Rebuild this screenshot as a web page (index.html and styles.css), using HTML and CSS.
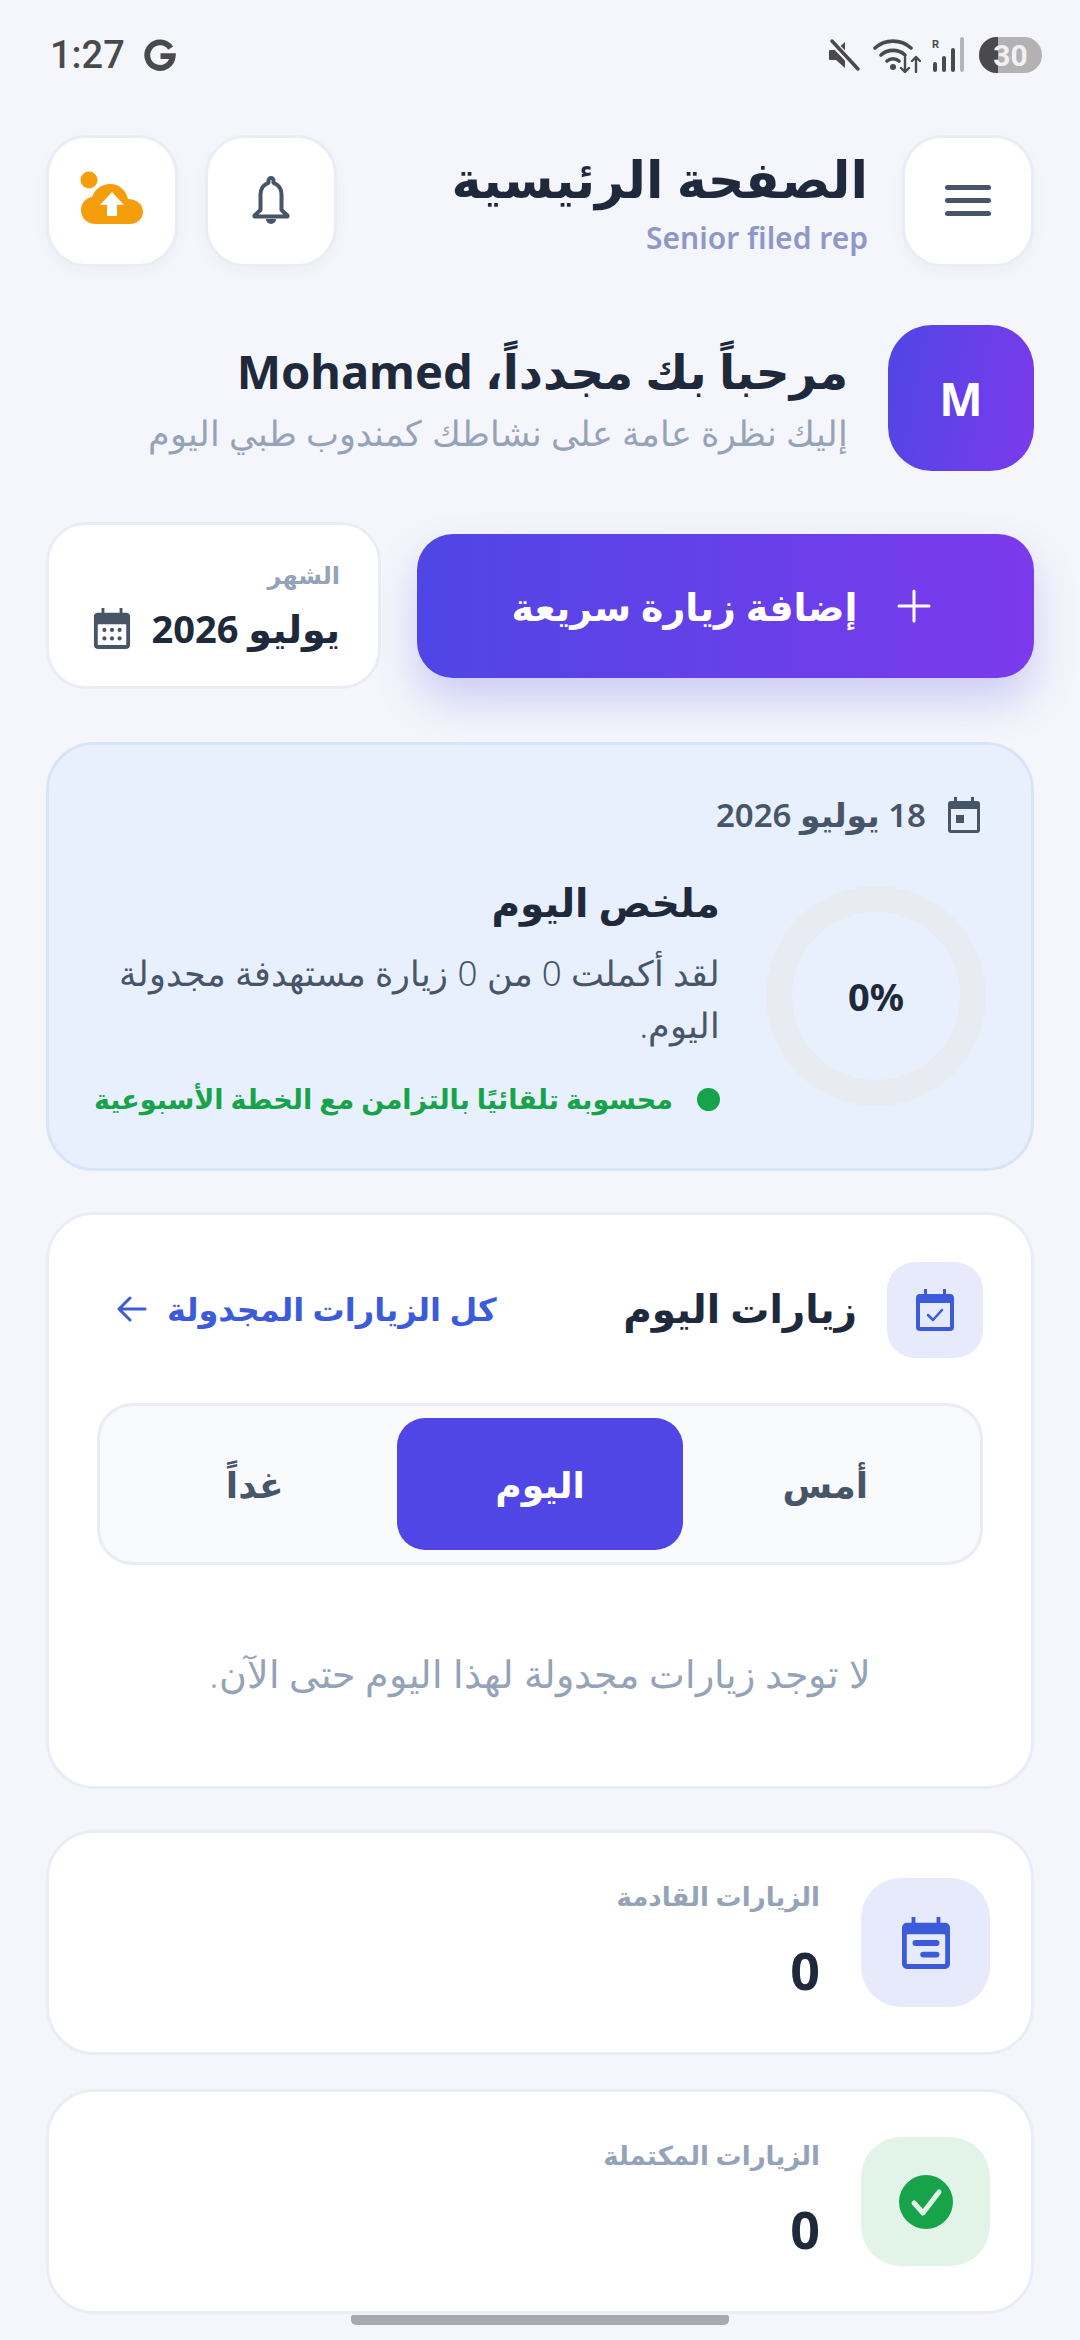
FILE: index.html
```html
<!DOCTYPE html>
<html lang="ar" dir="rtl">

<head>
    <meta charset="UTF-8" />
    <meta name="viewport" content="width=1080, height=2340" />
    <title>الصفحة الرئيسية</title>
    <link rel="stylesheet" href="styles.css">
</head>

<body>

    <!-- status bar -->
    <div class="status-bar" dir="ltr">
        <div class="status-left">
            <span class="clock">1:27</span>
            <svg class="g-icon" viewBox="0 0 32 32"><path d="M26 9.5A12 12 0 1 0 28 17H16.5" fill="none" stroke="#4a4a4c" stroke-width="5.5" /></svg>
        </div>
        <div class="status-right">
            <svg class="mute-icon" viewBox="0 0 34 34"><path d="M3 12h6l9-8v26l-9-8H3a1 1 0 0 1-1-1v-8a1 1 0 0 1 1-1z" fill="#4a4a4c" /><path d="M4 3l27 28" stroke="#f4f6fb" stroke-width="7" /><path d="M5 3l26 28" stroke="#4a4a4c" stroke-width="3.5" stroke-linecap="round" /></svg>
            <svg class="wifi-icon" viewBox="0 0 48 36"><g fill="none" stroke="#4a4a4c" stroke-width="3.6" stroke-linecap="round"><path d="M2 11a27 27 0 0 1 36 0" /><path d="M8 18a18 18 0 0 1 24 0" /><path d="M14 24a9 9 0 0 1 12 0" /></g><circle cx="20" cy="30" r="3" fill="#4a4a4c" /><g fill="none" stroke="#4a4a4c" stroke-width="2.4" stroke-linecap="round" stroke-linejoin="round"><path d="M32 20v15M28 31l4 4 4-4" /><path d="M43 35V20M39 24l4-4 4 4" /></g></svg>
            <svg class="signal-icon" viewBox="0 0 34 36"><text x="1" y="11" class="roaming">R</text><g stroke-linecap="round" stroke-width="4" stroke="#4a4a4c"><path d="M4 27v6M13 21v12M22 13v20" /><path d="M31 2v31" stroke="#b5b5b8" /></g></svg>
            <div class="battery"><span class="battery-fill"></span><span class="battery-num">30</span></div>
        </div>
    </div>

    <!-- top bar -->
    <header class="top-bar">
        <div class="icon-btn">
            <svg width="46" height="32" viewBox="0 0 46 32"><rect y="0" width="46" height="5" rx="2.500" fill="#475569" /><rect y="13" width="46" height="5" rx="2.500" fill="#475569" /><rect y="26" width="46" height="5" rx="2.500" fill="#475569" /></svg>
        </div>
        <div class="top-title">
            <h1>الصفحة الرئيسية</h1>
            <p dir="ltr">Senior filed rep</p>
        </div>
        <div class="icon-btn">
            <svg width="40" height="50" viewBox="0 0 40 50"><path d="M20 2c1.500 0 2.500 1.200 2.500 2.500v2.300c5 1.600 8 6.200 8 11.700v15.500l6 5.500v1H3.500v-1l6-5.500V18.500c0-5.500 3-10.100 8-11.700V4.500C17.500 3.200 18.500 2 20 2z" fill="none" stroke="#475569" stroke-width="4" stroke-linejoin="round" /><path d="M15 43h10a5 5 0 0 1-10 0z" fill="#475569" /></svg>
        </div>
        <div class="icon-btn">
            <svg width="66" height="60" viewBox="0 0 66 60"><circle cx="10" cy="9" r="8.500" fill="#f59e0b" /><path d="M17 53C8 53 2 47 2 39c0-7 5-12 11-13 3-8 10-13 18-13 9 0 16 6 18 15 8 0 15 5 15 13 0 7-6 12-13 12z" fill="#f59e0b" /><path d="M33 21L21 34h7v11h10V34h7z" fill="#fff" /></svg>
        </div>
    </header>

    <!-- welcome -->
    <section class="welcome">
        <div class="avatar">M</div>
        <div class="welcome-text">
            <h2>مرحباً بك مجدداً، Mohamed</h2>
            <p>إليك نظرة عامة على نشاطك كمندوب طبي اليوم</p>
        </div>
    </section>

    <!-- actions -->
    <section class="actions">
        <button class="quick-btn">
            <svg width="36" height="36" viewBox="0 0 36 36"><path d="M18 3v30M3 18h30" stroke="#fff" stroke-width="3" stroke-linecap="round" /></svg>
            <span>إضافة زيارة سريعة</span>
        </button>
        <div class="month-card">
            <span class="month-label">الشهر</span>
            <div class="month-value">
                <span>يوليو 2026</span>
                <svg width="38" height="42" viewBox="0 0 40 44"><path d="M9 1h3v5h16V1h3v5h4a4 4 0 0 1 4 4v30a4 4 0 0 1-4 4H5a4 4 0 0 1-4-4V10a4 4 0 0 1 4-4h4z" fill="#475569" /><rect x="5" y="18" width="30" height="22" rx="1" fill="#fff" /><g fill="#475569"><circle cx="12" cy="24" r="2.200" /><circle cx="20" cy="24" r="2.200" /><circle cx="28" cy="24" r="2.200" /><circle cx="12" cy="33" r="2.200" /><circle cx="20" cy="33" r="2.200" /><circle cx="28" cy="33" r="2.200" /></g></svg>
            </div>
        </div>
    </section>

    <!-- today summary -->
    <section class="summary-card">
        <div class="summary-date">
            <svg width="32" height="36" viewBox="0 0 32 36"><path d="M6 0h3v4h14V0h3v4h3a3 3 0 0 1 3 3v26a3 3 0 0 1-3 3H3a3 3 0 0 1-3-3V7a3 3 0 0 1 3-3h3z" fill="#475569" /><rect x="3" y="12" width="26" height="21" fill="#e8f0fe" /><rect x="8" y="18" width="8" height="8" fill="#475569" /></svg>
            <span>18 يوليو 2026</span>
        </div>
        <div class="summary-body">
            <div class="donut"><span dir="ltr">0%</span></div>
            <div class="summary-text">
                <h3>ملخص اليوم</h3>
                <p>لقد أكملت 0 من 0 زيارة مستهدفة مجدولة اليوم.</p>
                <div class="auto-note"><i class="dot"></i><span>محسوبة تلقائيًا بالتزامن مع الخطة الأسبوعية</span></div>
            </div>
        </div>
    </section>

    <!-- today visits -->
    <section class="visits-card">
        <div class="visits-head">
            <div class="visits-icon">
                <svg width="38" height="42" viewBox="0 0 38 42"><path d="M8 0h3v5h16V0h3v5h4a4 4 0 0 1 4 4v29a4 4 0 0 1-4 4H4a4 4 0 0 1-4-4V9a4 4 0 0 1 4-4h4z" fill="#3b5bdb" /><rect x="4" y="14" width="30" height="24" fill="#e7eafb" /><path d="M12 26l5 5 9-10" fill="none" stroke="#3b5bdb" stroke-width="2.500" stroke-linecap="round" stroke-linejoin="round" /></svg>
            </div>
            <h3>زيارات اليوم</h3>
            <a class="all-link">
                <span>كل الزيارات المجدولة</span>
                <svg width="30" height="28" viewBox="0 0 30 28"><path d="M28 14H3M13 3L2 14l11 11" fill="none" stroke="#3b5bdb" stroke-width="3" stroke-linecap="round" stroke-linejoin="round" /></svg>
            </a>
        </div>
        <div class="tabs">
            <div class="tab">أمس</div>
            <div class="tab active">اليوم</div>
            <div class="tab">غداً</div>
        </div>
        <p class="empty">لا توجد زيارات مجدولة لهذا اليوم حتى الآن.</p>
    </section>

    <!-- stats -->
    <section class="stat-card">
        <div class="stat-icon stat-blue">
            <svg width="48" height="54" viewBox="0 0 50 54"><path d="M10 0h4v6h22V0h4v6h5a5 5 0 0 1 5 5v38a5 5 0 0 1-5 5H5a5 5 0 0 1-5-5V11a5 5 0 0 1 5-5h5z" fill="#3b5bdb" /><rect x="5" y="18" width="40" height="31" rx="1" fill="#e7eafb" /><rect x="11" y="24" width="28" height="6" rx="3" fill="#3b5bdb" /><rect x="19" y="36" width="20" height="6" rx="3" fill="#3b5bdb" /></svg>
        </div>
        <div class="stat-text">
            <span class="stat-label">الزيارات القادمة</span>
            <span class="stat-value">0</span>
        </div>
    </section>

    <section class="stat-card">
        <div class="stat-icon stat-green">
            <svg width="54" height="54" viewBox="0 0 54 54"><circle cx="27" cy="27" r="27" fill="#16a34a" /><path d="M15 28l9 10 16-21" fill="none" stroke="#e2f4e8" stroke-width="5" stroke-linecap="round" stroke-linejoin="round" /></svg>
        </div>
        <div class="stat-text">
            <span class="stat-label">الزيارات المكتملة</span>
            <span class="stat-value">0</span>
        </div>
    </section>

    <div class="home-bar"></div>

</body>

</html>
```

FILE: styles.css
```css
* {
    margin: 0;
    padding: 0;
    box-sizing: border-box;
}

html,
body {
    width: 1080px;
    height: 2340px;
    overflow: hidden;
}

body {
    position: relative;
    background-color: #f4f6fb;
    padding: 0 46px;
    font-family: "Noto Sans", "DejaVu Sans", sans-serif;
    color: #1e293b;
}

/* status bar */
.status-bar {
    height: 135px;
    margin-right: -8px;
    padding: 34px 0 0 4px;
    display: flex;
    justify-content: space-between;
    align-items: flex-start;
}

.status-left,
.status-right {
    display: flex;
    align-items: center;
    height: 42px;
}

.clock {
    font-family: Roboto, sans-serif;
    font-size: 38px;
    font-weight: 500;
    color: #4a4a4c;
}

.g-icon {
    width: 34px;
    height: 34px;
    margin-left: 18px;
}

.mute-icon {
    width: 34px;
    height: 34px;
}

.wifi-icon {
    width: 48px;
    height: 36px;
    margin-left: 12px;
}

.signal-icon {
    width: 34px;
    height: 36px;
    margin-left: 10px;
}

.roaming {
    font-family: Roboto, sans-serif;
    font-size: 11px;
    font-weight: 700;
    fill: #4a4a4c;
}

.battery {
    position: relative;
    width: 63px;
    height: 36px;
    margin-left: 14px;
    border-radius: 18px;
    background-color: #b2b2b4;
    overflow: hidden;
    display: flex;
    align-items: center;
    justify-content: center;
}

.battery-fill {
    position: absolute;
    left: 0;
    top: 0;
    bottom: 0;
    width: 19px;
    background-color: #4a4a4c;
}

.battery-num {
    position: relative;
    font-family: Roboto, sans-serif;
    font-size: 30px;
    font-weight: 700;
    color: #f1f1f3;
}

/* top bar */
.top-bar {
    display: flex;
    align-items: center;
    gap: 27px;
    height: 132px;
}

.icon-btn {
    width: 132px;
    height: 132px;
    flex: none;
    display: flex;
    align-items: center;
    justify-content: center;
    background-color: #fff;
    border: 3px solid #e9edf5;
    border-radius: 40px;
    box-shadow: 0 6px 16px rgba(30, 41, 59, 0.03);
}

.top-title {
    flex: 1;
    padding-right: 7px;
}

.top-title h1 {
    font-size: 51px;
    font-weight: 700;
    line-height: 72px;
    color: #1e293b;
}

.top-title p {
    margin-top: 2px;
    font-size: 30px;
    font-weight: 600;
    line-height: 44px;
    color: #8f97c9;
    text-align: right;
}

/* welcome */
.welcome {
    display: flex;
    align-items: center;
    gap: 40px;
    margin-top: 58px;
}

.avatar {
    width: 146px;
    height: 146px;
    flex: none;
    display: flex;
    align-items: center;
    justify-content: center;
    border-radius: 44px;
    background: linear-gradient(100deg, #4f46e5, #7c3aed);
    color: #fff;
    font-size: 46px;
    font-weight: 700;
}

.welcome-text h2 {
    font-size: 47px;
    font-weight: 700;
    line-height: 70px;
}

.welcome-text p {
    font-size: 35px;
    font-weight: 300;
    line-height: 54px;
    color: #94a3b8;
}

/* actions */
.actions {
    display: flex;
    align-items: center;
    gap: 36px;
    margin-top: 51px;
}

.quick-btn {
    flex: 1;
    height: 144px;
    padding-right: 8px;
    display: flex;
    align-items: center;
    justify-content: center;
    gap: 38px;
    border: none;
    border-radius: 36px;
    background: linear-gradient(90deg, #4f46e5, #7c3aed);
    box-shadow: 0 22px 44px rgba(79, 70, 229, 0.24);
    color: #fff;
    font-family: inherit;
    font-size: 38px;
    font-weight: 700;
}

.month-card {
    width: 335px;
    height: 167px;
    flex: none;
    padding: 32px 38px 0 44px;
    background-color: #fff;
    border: 3px solid #e9edf5;
    border-radius: 40px;
}

.month-label {
    display: block;
    font-size: 24px;
    font-weight: 600;
    line-height: 36px;
    color: #94a3b8;
}

.month-value {
    display: flex;
    align-items: center;
    justify-content: space-between;
    margin-top: 10px;
    font-size: 38px;
    font-weight: 700;
    line-height: 50px;
    white-space: nowrap;
}

/* today summary */
.summary-card {
    height: 429px;
    margin-top: 53px;
    padding: 50px 45px 0 45px;
    background-color: #e8f0fe;
    border: 3px solid #d8e4f8;
    border-radius: 48px;
}

.summary-date {
    display: flex;
    align-items: center;
    gap: 22px;
    margin-right: 6px;
    font-size: 33px;
    font-weight: 600;
    line-height: 40px;
    color: #475569;
}

.summary-body {
    display: flex;
    align-items: flex-start;
    gap: 46px;
    margin-top: 51px;
}

.donut {
    width: 220px;
    height: 220px;
    flex: none;
    display: flex;
    align-items: center;
    justify-content: center;
    border: 26px solid #e9ebf2;
    border-radius: 50%;
    font-size: 38px;
    font-weight: 700;
}

.summary-text {
    margin-top: -9px;
}

.summary-text h3 {
    font-size: 39px;
    font-weight: 700;
    line-height: 50px;
}

.summary-text p {
    margin-top: 20px;
    font-size: 35px;
    font-weight: 300;
    line-height: 52px;
    color: #475569;
}

.auto-note {
    display: flex;
    align-items: center;
    gap: 24px;
    margin-top: 28px;
    font-size: 27px;
    font-weight: 700;
    line-height: 40px;
    color: #16a34a;
    white-space: nowrap;
}

.dot {
    width: 23px;
    height: 23px;
    flex: none;
    border-radius: 50%;
    background-color: #16a34a;
}

/* today visits */
.visits-card {
    height: 577px;
    margin-top: 41px;
    padding: 47px 48px 0 48px;
    background-color: #fff;
    border: 3px solid #e9edf5;
    border-radius: 48px;
}

.visits-head {
    display: flex;
    align-items: center;
    gap: 30px;
}

.visits-icon {
    width: 96px;
    height: 96px;
    flex: none;
    display: flex;
    align-items: center;
    justify-content: center;
    background-color: #e7eafb;
    border-radius: 28px;
}

.visits-head h3 {
    margin-top: -6px;
    font-size: 39px;
    font-weight: 700;
}

.all-link {
    margin-top: -3px;
    margin-right: auto;
    margin-left: 20px;
    display: flex;
    align-items: center;
    gap: 20px;
    font-size: 32px;
    font-weight: 600;
    color: #3b5bdb;
}

.tabs {
    display: flex;
    height: 162px;
    margin-top: 45px;
    padding: 12px;
    background-color: #f8fafc;
    border: 3px solid #e8ecf4;
    border-radius: 36px;
}

.tab {
    flex: 1;
    display: flex;
    align-items: center;
    justify-content: center;
    border-radius: 28px;
    font-size: 36px;
    font-weight: 600;
    color: #475569;
}

.tab.active {
    background-color: #4f46e5;
    color: #fff;
}

.empty {
    margin-top: 78px;
    font-size: 38px;
    font-weight: 300;
    line-height: 60px;
    text-align: center;
    color: #94a3b8;
}

/* stats */
.stat-card {
    height: 225px;
    margin-top: 34px;
    padding: 0 41px;
    display: flex;
    align-items: center;
    gap: 41px;
    background-color: #fff;
    border: 3px solid #e9edf5;
    border-radius: 48px;
}

.visits-card + .stat-card {
    margin-top: 41px;
}

.stat-icon {
    width: 129px;
    height: 129px;
    flex: none;
    display: flex;
    align-items: center;
    justify-content: center;
    border-radius: 40px;
}

.stat-blue {
    background-color: #e7eafb;
}

.stat-green {
    background-color: #e2f4e8;
}

.stat-text {
    display: flex;
    flex-direction: column;
    gap: 23px;
    margin-bottom: 9px;
}

.stat-label {
    font-size: 26px;
    font-weight: 600;
    line-height: 40px;
    color: #94a3b8;
}

.stat-value {
    font-size: 52px;
    font-weight: 700;
    line-height: 62px;
}

.home-bar {
    position: absolute;
    left: 351px;
    top: 2315px;
    width: 378px;
    height: 10px;
    border-radius: 2px 2px 5px 5px;
    background-color: #a8aaae;
}
```
